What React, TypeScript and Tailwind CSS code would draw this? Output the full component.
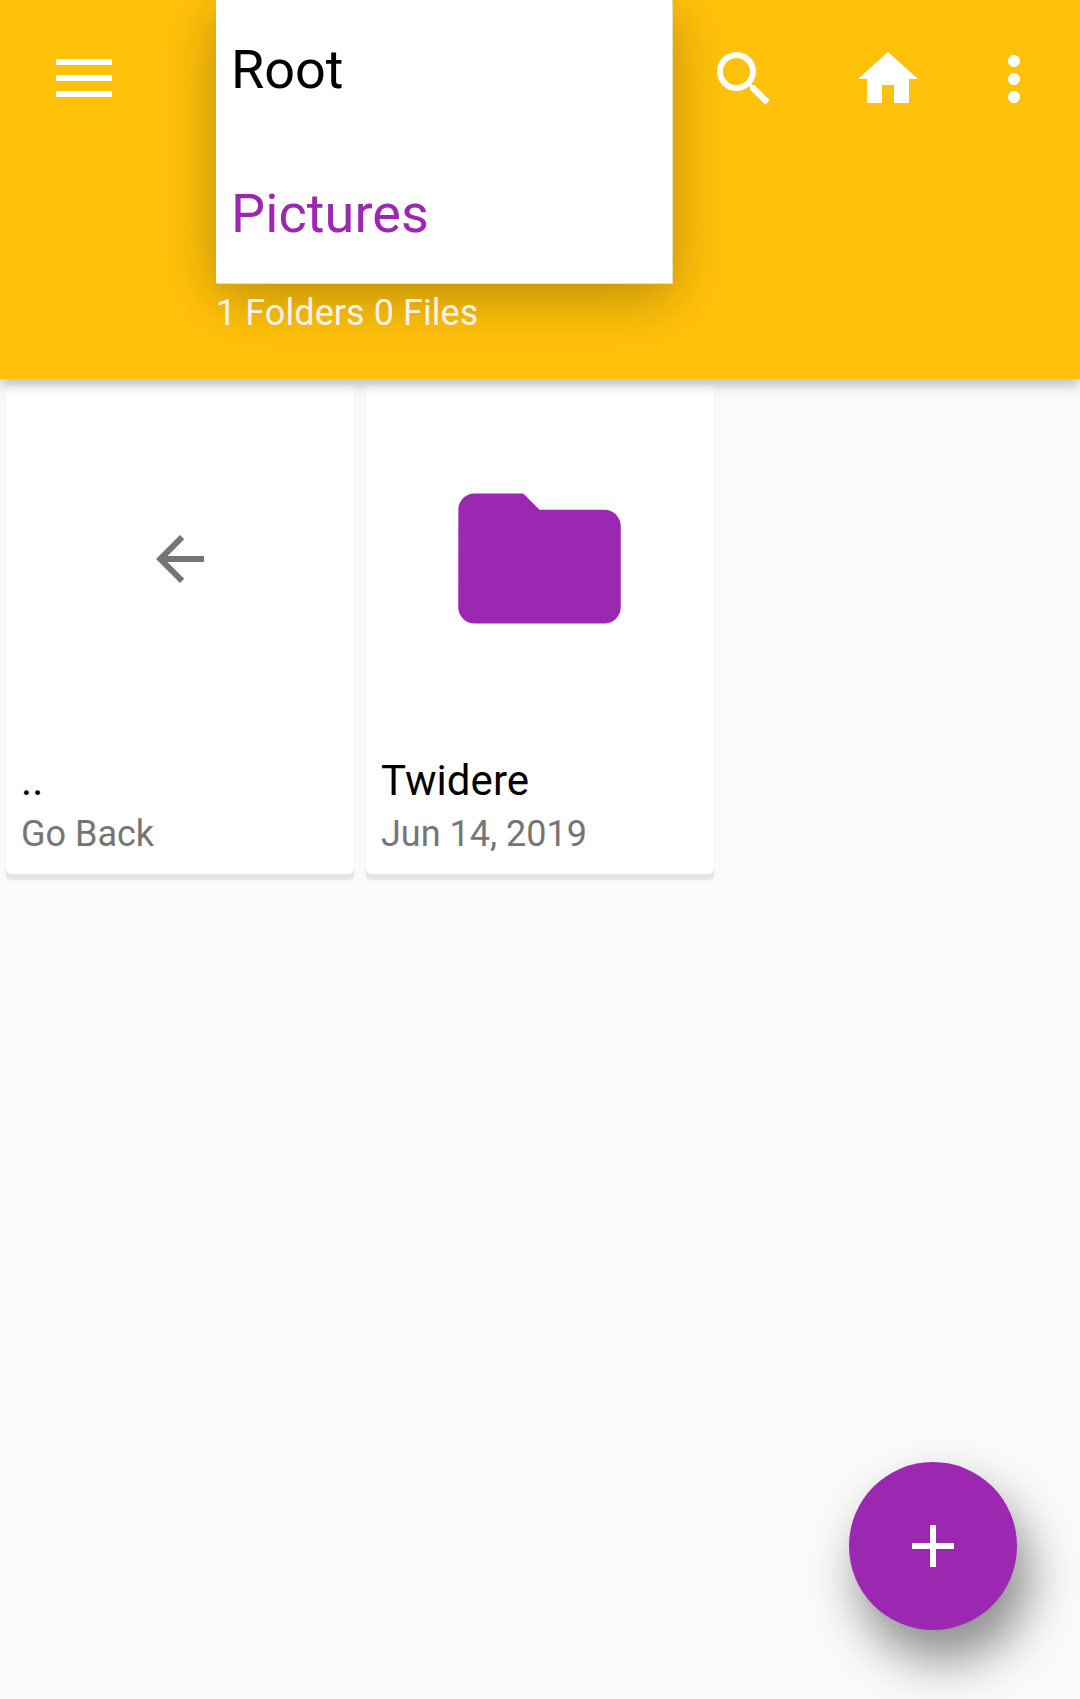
import type { ReactNode } from "react";

function Icon({ d, className }: { d: string; className: string }) {
  return (
    <svg viewBox="0 0 24 24" fill="currentColor" className={className} aria-hidden="true">
      <path d={d} />
    </svg>
  );
}

const SEARCH =
  "M15.5 14h-.79l-.28-.27C15.41 12.59 16 11.11 16 9.5 16 5.91 13.09 3 9.5 3S3 5.91 3 9.5 5.91 16 9.5 16c1.61 0 3.09-.59 4.23-1.57l.27.28v.79l5.1 5.09 1.49-1.49-5.09-5.1zm-6 0C7.01 14 5 11.99 5 9.5S7.01 5 9.5 5 14 7.01 14 9.5 11.99 14 9.5 14z";
const HOME = "M10 20v-6h4v6h5v-8h3L12 3 2 12h3v8z";
const MORE =
  "M12 8c1.1 0 2-.9 2-2s-.9-2-2-2-2 .9-2 2 .9 2 2 2zm0 2c-1.1 0-2 .9-2 2s.9 2 2 2 2-.9 2-2-.9-2-2-2zm0 6c-1.1 0-2 .9-2 2s.9 2 2 2 2-.9 2-2-.9-2-2-2z";
const BACK = "M20 11H7.83l5.59-5.59L12 4l-8 8 8 8 1.41-1.41L7.83 13H20v-2z";
const FOLDER =
  "M10 4H4c-1.1 0-1.99.9-1.99 2L2 18c0 1.1.9 2 2 2h16c1.1 0 2-.9 2-2V8c0-1.1-.9-2-2-2h-8l-2-2z";

function Card({ title, subtitle, children }: { title: string; subtitle: string; children: ReactNode }) {
  return (
    <div className="flex h-[489px] w-[348px] flex-col rounded-[6px] bg-white shadow-[0_6px_2px_-0.5px_rgba(0,0,0,0.085)]">
      <div className="flex h-[348px] items-center justify-center">{children}</div>
      <div className="flex flex-col pl-[15px] pt-[23px]">
        <span className="text-[42px] leading-[49px] tracking-[0.06px] text-black">{title}</span>
        <span className="pt-[5px] text-[36px] leading-[48px] text-[#757575]">{subtitle}</span>
      </div>
    </div>
  );
}

export default function App() {
  return (
    <div className="relative flex h-[1699px] w-[1080px] flex-col overflow-hidden bg-[#fafafa] font-['Roboto',sans-serif]">
      <header className="relative z-10 flex h-[379px] shrink-0 flex-col bg-[#ffc10a] shadow-[0_5px_12px_rgba(0,0,0,0.28)]">
        <div className="flex h-[158px] items-start pl-14 pr-[30px] text-white">
          <button aria-label="Menu" className="mt-[59px] flex w-14 flex-col gap-[10px]">
            <span className="h-[6px] w-full bg-white" />
            <span className="h-[6px] w-full bg-white" />
            <span className="h-[6px] w-full bg-white" />
          </button>
          <div className="ml-auto mt-[43px] flex">
            <Icon d={SEARCH} className="size-[72px]" />
            <Icon d={HOME} className="ml-[72px] size-[72px]" />
            <Icon d={MORE} className="ml-[54px] size-[72px]" />
          </div>
        </div>
        <p className="relative z-10 mt-[134px] pl-[216px] text-[36px] leading-[42px] tracking-[0.06px] text-[#f4f2ee]">
          1 Folders 0 Files
        </p>
        <ul
          role="listbox"
          className="absolute left-[216px] top-0 h-[283px] w-[456px] bg-white text-[54px] leading-[64px] shadow-[1px_1px_0_#eadfb8,0_14px_64px_rgba(0,0,0,0.15),0_14px_40px_rgba(0,0,0,0.13)]"
        >
          <li className="h-[144px] pl-[15px] pt-[38px] text-black">Root</li>
          <li className="pl-[15px] pt-[38px] tracking-[0.1px] text-[#9c27b0]">Pictures</li>
        </ul>
      </header>

      <main className="flex gap-3 px-[6px] pt-[6px]">
        <Card title=".." subtitle="Go Back">
          <Icon d={BACK} className="size-[72px] text-[#757575]" />
        </Card>
        <Card title="Twidere" subtitle="Jun 14, 2019">
          <Icon d={FOLDER} className="mb-px mr-px size-[195px] text-[#9c27b0]" />
        </Card>
      </main>

      <button
        aria-label="Add"
        className="absolute left-[849px] top-[1462px] flex size-[168px] items-center justify-center rounded-full bg-[#9c27b0] text-white shadow-[11px_29px_48px_2px_rgba(0,0,0,0.43)]"
      >
        <Icon d="M19 13h-6v6h-2v-6H5v-2h6V5h2v6h6v2z" className="size-[72px]" />
      </button>
    </div>
  );
}
